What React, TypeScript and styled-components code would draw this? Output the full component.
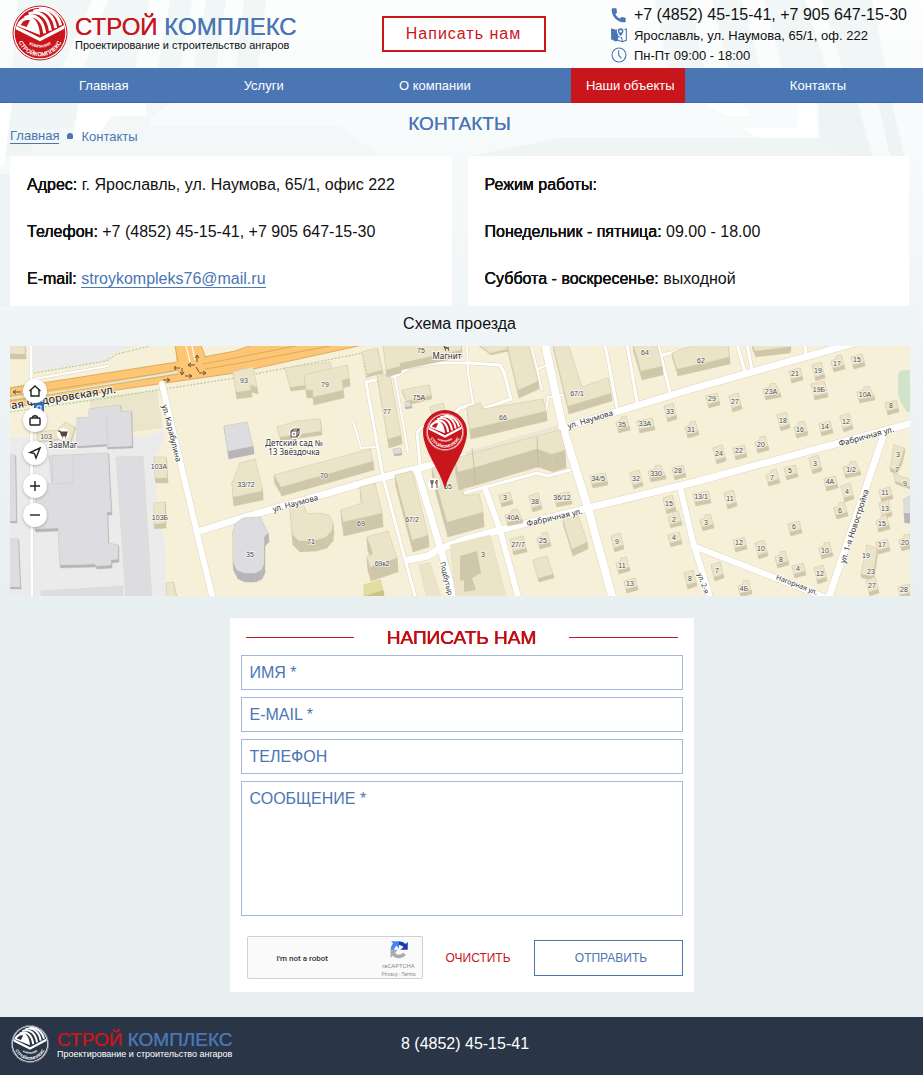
import React, { useId } from "react";
import styled, { createGlobalStyle } from "styled-components";

const blue = "#4a76b4";
const red = "#c9161d";

const GlobalStyle = createGlobalStyle`
  *, *::before, *::after { box-sizing: border-box; }
  body {
    margin: 0;
    background: #e7eff1;
    color: #111;
    font-family: "Liberation Sans", Arial, sans-serif;
    font-size: 16px;
  }
  button, input, textarea { font: inherit; color: inherit; }
`;

/* ---------- page ---------- */

const Page = styled.div`
  position: relative;
  z-index: 0;
  display: flex;
  flex-direction: column;
`;

const BackdropSvg = styled.svg`
  position: absolute;
  z-index: -1;
  top: 0;
  left: 0;
  width: 100%;
  height: 620px;
`;

function Backdrop() {
  const id = useId();
  return (
    <BackdropSvg viewBox="0 0 923 620" preserveAspectRatio="none" aria-hidden="true">
      <defs>
        <linearGradient id={id} x1="0" y1="0" x2="0" y2="1">
          <stop offset="0" stopColor="#fdfefe" />
          <stop offset="0.25" stopColor="#f6fafa" />
          <stop offset="0.5" stopColor="#f0f5f7" />
          <stop offset="1" stopColor="#e7eff1" />
        </linearGradient>
      </defs>
      <rect width="923" height="620" fill={`url(#${id})`} />
      <path d="M18 0H92L62 68H12ZM108 0H150L135 68H84ZM170 0H192L180 68H158ZM206 0H226L216 68H194ZM244 0H266L258 68H236Z" fill="#f1f6f6" />
      <path d="M655 0H690L704 68H668ZM712 0H742L760 68H728ZM764 0H805L826 68H782ZM822 0H872L886 68H842Z" fill="#f1f6f6" />
      <path d="M12 103H78L70 156H4Z" fill="#f0f5f6" />
      <path d="M148 103H172L150 118V126H340L380 156H30L38 130L94 126Z" fill="#f3f7f8" />
      <path d="M0 103H12L4 165H0ZM80 103H146V116H112L94 140H72Z" fill="#fff" />
      <path d="M560 138H818L862 156H470Z" fill="#eff5f5" />
      <path d="M740 103L752 116H730L706 106V103ZM798 103H816L818 138H760L740 128H798Z" fill="#fff" />
      <path d="M818 103H858L872 156H846L820 140Z" fill="#edf4f3" />
      <path d="M868 103H923V156H888Z" fill="#f8fbfb" />
      <path d="M878 103H892L904 156H890Z" fill="#eef4f4" />
      <path d="M0 174H10V306H0Z" fill="#edf3f5" />
    </BackdropSvg>
  );
}

/* ---------- logo ---------- */

const Emblem = styled.svg<{ $size: number }>`
  display: block;
  flex: none;
  width: ${(p) => p.$size}px;
  height: ${(p) => p.$size}px;
`;

function EmblemDrawing({ ink, paper }: { ink: string; paper: string }) {
  const id = useId();
  return (
    <>
      <circle cx="84" cy="84" r="83" fill={paper} />
      <circle cx="84" cy="84" r="81" fill="none" stroke={ink} strokeWidth="3" />
      <circle cx="84" cy="84" r="76" fill={ink} />
      <path d="M14 62C20 46 36 34 52 34C72 38 82 62 84 90Z" fill={paper} />
      <path d="M26 60C32 48 42 42 54 46L44 66Z" fill={ink} />
      <g fill="none" stroke={paper} strokeWidth="9">
        <path d="M38 38C74 22 94 50 98 85" />
        <path d="M50 27C88 12 110 42 115 77" />
        <path d="M64 19C102 6 126 36 131 69" />
        <path d="M82 13C118 8 140 34 146 61" />
      </g>
      <path d="M11 62L84 98L157 60V71L84 109L11 73Z" fill={paper} />
      <path id={`${id}a`} d="M14 84A70 70 0 0 0 154 84" fill="none" />
      <path id={`${id}b`} d="M36 106Q84 150 132 106" fill="none" />
      <g fill={paper} fontFamily="Liberation Sans, Arial, sans-serif" fontWeight="700" textAnchor="middle">
        <text fontSize="18">
          <textPath href={`#${id}a`} startOffset="50%">СТРОЙКОМПЛЕКС</textPath>
        </text>
        <text fontSize="12">
          <textPath href={`#${id}b`} startOffset="50%">КОМПАНИЯ</textPath>
        </text>
      </g>
    </>
  );
}

const BrandLink = styled.a<{ $compact?: boolean }>`
  display: flex;
  align-items: center;
  gap: ${(p) => (p.$compact ? 8 : 7)}px;
  justify-self: start;
  color: ${(p) => (p.$compact ? "#fff" : "#111")};
  text-decoration: none;
  white-space: nowrap;
`;

const BrandName = styled.span<{ $compact?: boolean }>`
  display: block;
  color: ${blue};
  font-size: ${(p) => (p.$compact ? 19 : 24)}px;
  line-height: ${(p) => (p.$compact ? 19 : 24)}px;
  text-shadow: 0 0 0 currentColor;
`;

const BrandAccent = styled.span`
  color: ${red};
`;

const Tagline = styled.span<{ $compact?: boolean }>`
  display: block;
  font-size: ${(p) => (p.$compact ? 9 : 11)}px;
  line-height: ${(p) => (p.$compact ? 10 : 12)}px;
`;

function Brand({ compact }: { compact?: boolean }) {
  return (
    <BrandLink href="#" $compact={compact}>
      <Emblem $size={compact ? 38 : 56} viewBox="0 0 168 168" aria-hidden="true">
        <EmblemDrawing ink={compact ? "#2a3648" : red} paper="#fff" />
      </Emblem>
      <span>
        <BrandName $compact={compact}>
          <BrandAccent>СТРОЙ</BrandAccent> КОМПЛЕКС
        </BrandName>
        <Tagline $compact={compact}>Проектирование и строительство ангаров</Tagline>
      </span>
    </BrandLink>
  );
}

/* ---------- header ---------- */

const Header = styled.header`
  display: grid;
  grid-template-columns: 1fr auto 1fr;
  align-items: center;
  min-height: 68px;
  padding: 0 8px 2px 12px;
`;

const WriteButton = styled.button`
  width: 164px;
  height: 36px;
  margin-top: 2px;
  border: 2px solid ${red};
  background: #fff;
  color: ${red};
  font-size: 16px;
  letter-spacing: 1px;
  cursor: pointer;
`;

const ContactList = styled.ul`
  justify-self: end;
  margin: 0;
  padding: 4px 8px 0 0;
  list-style: none;
`;

const ContactItem = styled.li<{ $large?: boolean }>`
  display: flex;
  align-items: center;
  gap: 7px;
  height: 20px;
  font-size: ${(p) => (p.$large ? 16 : 13)}px;
  white-space: nowrap;

  svg { flex: none; width: 16px; height: 16px; }
`;

const Nav = styled.nav`
  display: flex;
  justify-content: space-between;
  height: 35px;
  padding: 0 67px 0 64px;
  background: ${blue};
  border-bottom: 1px solid #3b68a8;
`;

const NavLink = styled.a<{ $active?: boolean }>`
  display: flex;
  align-items: center;
  margin-bottom: -1px;
  padding: 0 10px 0 15px;
  background: ${(p) => (p.$active ? red : "transparent")};
  color: #fff;
  font-size: 13px;
  text-decoration: none;
  white-space: nowrap;
`;

/* ---------- content ---------- */

const TitleRow = styled.div`
  display: grid;
  grid-template-columns: 1fr auto 1fr;
  min-height: 53px;
  padding: 8px 14px 11px 10px;
`;

const PageTitle = styled.h1`
  margin: 0;
  color: ${blue};
  font-size: 19px;
  font-weight: 400;
  line-height: 26px;
  text-shadow: 0 0 0 currentColor;
`;

const Breadcrumbs = styled.nav`
  display: flex;
  align-items: center;
  align-self: end;
  gap: 8px;
  height: 18px;
  color: ${blue};
  font-size: 13px;
`;

const CrumbLink = styled.a`
  color: inherit;
  line-height: 15px;
  text-decoration: none;
  border-bottom: 1px solid ${blue};
`;

const CrumbDot = styled.span`
  width: 6px;
  height: 6px;
  border-radius: 3px 3px 1px 1px;
  background: ${blue};
`;

const Cards = styled.div`
  display: grid;
  grid-template-columns: 1fr 1fr;
  gap: 16px;
  padding: 0 14px 0 10px;
`;

const Card = styled.section`
  display: flex;
  flex-direction: column;
  gap: 27px;
  min-height: 150px;
  padding: 19px 17px 17px;
  background: #fff;
`;

const CardLine = styled.p`
  margin: 0;
  line-height: 20px;
`;

const Term = styled.strong`
  font-weight: 400;
  text-shadow: 0 0 0 currentColor, 0 0 0 currentColor;
`;

const MailLink = styled.a`
  color: ${blue};
  text-decoration: none;
  border-bottom: 1px solid ${blue};
`;

const MapTitle = styled.h2`
  margin: 0;
  padding: 0 14px 4px 10px;
  font-size: 16px;
  font-weight: 400;
  line-height: 36px;
  text-align: center;
`;

const MapBox = styled.section`
  position: relative;
  height: 250px;
  margin: 0 13px 0 10px;
  overflow: hidden;
`;

const MapSvg = styled.svg`
  display: block;
  width: 100%;
  height: 100%;
`;

const MapControls = styled.div`
  position: absolute;
  top: 33px;
  left: 13px;
  display: flex;
  flex-direction: column;
  gap: 9px;
`;

const ControlGroup = styled.div`
  display: flex;
  flex-direction: column;
  gap: 5px;
`;

const RoundButton = styled.button`
  display: grid;
  place-items: center;
  width: 24px;
  height: 24px;
  padding: 0;
  border: 0;
  border-radius: 50%;
  background: #fff;
  box-shadow: 0 1px 3px rgba(0, 0, 0, 0.25);
  cursor: pointer;

  svg { width: 14px; height: 14px; fill: none; stroke: #222; stroke-width: 1.4; }
`;

/* ---------- map drawing ---------- */

type Shape = { pts: string; h: number; tone?: "sand" | "grey" | "olive" };

const tones = {
  sand: ["#ebe4c8", "#cfc7a9"],
  grey: ["#dddde1", "#b6b6ba"],
  olive: ["#e4dda2", "#cbc383"],
};

const buildings: Shape[] = [
  { pts: "10,346 25,346 25,354 10,354", h: 5 },
  { pts: "37,432 58,430 65,422 75,427 70,442 58,439 38,441", h: 1 },
  { pts: "77,418 89,417 89,409 120,405 121,412 131,411 132,446 107,447 107,444 93,445 77,446", h: 2, tone: "grey" },
  { pts: "49,456 108,453 111,512 107,512 108,543 118,545 118,559 111,560 111,565 96,566 95,564 60,565 58,528 35,529 37,483 52,484", h: 3, tone: "grey" },
  { pts: "116,457 143,456 152,600 126,600", h: 0, tone: "grey" },
  { pts: "41,591 123,586 123,600 41,600", h: 0, tone: "grey" },
  { pts: "10,455 15,455 16,521 10,521", h: 2, tone: "grey" },
  { pts: "10,539 18,539 20,587 10,587", h: 2, tone: "grey" },
  { pts: "154,457 166,457 167,478 155,478", h: 5 },
  { pts: "154,503 165,502 165,523 154,524", h: 5 },
  { pts: "166,583 173,582 177,600 167,600", h: 2 },
  { pts: "224,426 247,422 253,446 228,451", h: 8, tone: "grey" },
  { pts: "233,532 235,524 243,518 260,517 268,533 264,537 264,564 261,570 255,573 244,573 237,570 233,562", h: 9, tone: "grey" },
  { pts: "233,372 253,367 257,387 250,385 251,390 236,392", h: 7 },
  { pts: "285,368 330,362 332,370 305,375 306,385 290,387", h: 4 },
  { pts: "304,375 347,365 349,378 342,380 343,390 313,397 313,390 306,390", h: 8 },
  { pts: "277,427 297,421 320,419 321,431 280,437", h: 4 },
  { pts: "274,475 370,449 373,461 281,487", h: 9 },
  { pts: "232,483 240,463 255,459 262,487 262,491 233,497", h: 9 },
  { pts: "290,508 303,503 307,514 318,513 329,515 333,523 332,530 326,537 316,540 299,541 292,534", h: 11 },
  { pts: "341,510 362,503 360,487 375,483 382,513 343,522", h: 14 },
  { pts: "367,537 388,531 397,558 370,567 367,557 373,554", h: 14 },
  { pts: "364,585 380,580 383,590 364,596", h: 6, tone: "olive" },
  { pts: "362,352 377,348 382,370 367,374", h: 3 },
  { pts: "377,374 390,375 401,435 388,439", h: 9 },
  { pts: "383,344 461,344 461,350 400,363 400,366 386,370", h: 7 },
  { pts: "402,390 429,385 431,395 407,401", h: 4 },
  { pts: "405,402 410,402 411,406 405,407", h: 2, tone: "grey" },
  { pts: "393,449 400,448 401,453 394,454", h: 2, tone: "grey" },
  { pts: "430,407 443,403 450,425 435,428", h: 3 },
  { pts: "395,475 412,471 428,535 412,540", h: 12 },
  { pts: "419,565 430,562 442,600 427,600", h: 0 },
  { pts: "432,468 455,462 464,496 479,494 483,512 447,522", h: 15 },
  { pts: "455,458 537,436 560,430 565,450 552,454 537,449 476,467 458,472", h: 18 },
  { pts: "467,407 480,403 483,409 543,399 546,411 470,429", h: 10 },
  { pts: "478,344 508,344 508,349 490,353", h: 2 },
  { pts: "507,344 528,344 538,381 518,390", h: 8 },
  { pts: "553,344 568,344 582,387 608,378 611,393 568,406", h: 8 },
  { pts: "633,344 657,344 662,366 641,371", h: 9 },
  { pts: "672,353 692,346 728,344 729,357 677,369", h: 7 },
  { pts: "752,344 790,344 789,347 755,351", h: 6 },
  { pts: "450,545 490,535 507,600 456,600", h: 0 },
  { pts: "563,520 578,515 587,542 572,549", h: 7 },
  { pts: "533,560 547,556 553,574 538,578", h: 4 },
  { pts: "904,499 910,496 910,513 904,513", h: 10, tone: "grey" },
  { pts: "894,445 904,448 901,460 896,470 890,468", h: 4 },
  { pts: "894,474 912,480 912,487 895,481", h: 3 },
  { pts: "867,545 877,548 873,576 861,574", h: 4 },
];

const houses: [number, number, string][] = [
  [505, 498, "3"], [535, 502, "38"], [513, 518, "40А"], [562, 498, "36/12"], [518, 545, "27/7"],
  [543, 541, "25"], [598, 479, "34/5"], [636, 479, "32"], [656, 474, "330"], [678, 471, "28"],
  [617, 542, "9"], [622, 566, "11"], [630, 584, "13"], [669, 504, "15"], [674, 520, "2"],
  [674, 538, "4"], [690, 579, "8"], [622, 425, "35"], [645, 424, "33А"], [670, 412, "33"],
  [691, 430, "31"], [712, 399, "29"], [735, 402, "27"], [771, 392, "23А"], [795, 374, "21"],
  [818, 371, "19"], [837, 364, "17"], [857, 360, "15"], [819, 390, "19Б"], [865, 395, "10А"],
  [891, 406, "8"], [783, 421, "18"], [800, 430, "16"], [825, 427, "14"], [846, 422, "12"],
  [761, 445, "20"], [739, 451, "22"], [719, 454, "24"], [772, 478, "7"], [790, 471, "5"],
  [815, 464, "3"], [851, 470, "1/2"], [830, 482, "4А"], [847, 492, "4"], [840, 511, "6"],
  [701, 497, "13/1"], [730, 499, "11"], [706, 523, "3"], [739, 543, "12"], [761, 549, "10"],
  [781, 560, "8"], [798, 569, "4"], [820, 574, "12"], [825, 551, "10"], [794, 527, "6"],
  [717, 571, "7"], [744, 589, "4Б"], [885, 493, "11"], [885, 509, "13"], [882, 524, "15"],
  [882, 545, "17"], [872, 586, "27"], [905, 543, "20"], [904, 590, "28"],
];

const numbers: [number, number, string][] = [
  [503, 417, "66"], [645, 352, "64"], [701, 360, "62"], [577, 393, "67/1"], [325, 384, "79"],
  [387, 411, "77"], [421, 350, "75"], [419, 397, "75А"], [244, 380, "93"], [324, 475, "70"],
  [246, 484, "33/72"], [250, 554, "35"], [311, 541, "71"], [361, 523, "69"], [412, 519, "67/2"],
  [382, 563, "69к2"], [448, 486, "65"], [483, 554, "3"], [46, 436, "103"], [159, 466, "103А"],
  [160, 517, "103Б"], [898, 454, "3"], [897, 469, "7"], [905, 483, "9"], [866, 555, "19"], [871, 571, "23"],
];

const streets: [string, number][] = [
  ["M31 346L32 600", 3],
  ["M34 379L108 366", 2],
  ["M162 384L197 533L213 600", 6],
  ["M197 532L235 520L380 478L463 457L560 429L695 388L855 343", 7],
  ["M408 560L428 556L437 550L463 540L500 530L588 508L695 482L912 423", 7],
  ["M545 344L563 428L588 508L613 600", 8],
  ["M417 470L440 547L455 600", 7],
  ["M485 488L500 530L519 600", 6],
  ["M460 494L537 473L548 476L570 470", 3],
  ["M366 382L383 477L416 600", 3],
  ["M366 382L398 375L410 367L437 363H470L500 365L504 372L511 399L485 408", 3],
  ["M395 377L408 452", 2],
  ["M353 421L361 448L375 447", 2],
  ["M420 465L417 432L422 427L448 420L460 408L473 404", 3],
  ["M467 344L468 372L473 403", 2],
  ["M532 348L537 369L542 390M537 369L546 366M563 395L548 397L546 412", 2],
  ["M605 344L617 407", 3],
  ["M627 344L637 402", 3],
  ["M658 344L670 392M662 355L697 347", 3],
  ["M737 344L745 372M747 344L752 370M805 344L806 354", 3],
  ["M680 487L693 542L711 600", 6],
  ["M693 546L832 600", 6],
  ["M884 434L828 600", 7],
];

function parse(pts: string) {
  return pts.split(" ").map((p) => p.split(",").map(Number));
}

function Building({ pts, h, tone = "sand" }: Shape) {
  const [roof, wall] = tones[tone];
  const corners = parse(pts);
  return (
    <g>
      {h > 0 &&
        corners.map(([x, y], i) => {
          const [nx, ny] = corners[(i + 1) % corners.length];
          return (
            <path key={i} d={`M${x} ${y}L${nx} ${ny}L${nx + 1} ${ny + h}L${x + 1} ${y + h}Z`} fill={wall} stroke={wall} strokeWidth="0.4" />
          );
        })}
      <polygon points={pts} fill={roof} stroke="#d9d1b4" strokeOpacity="0.6" strokeWidth="0.6" />
    </g>
  );
}

/* Small houses come in three outlines: a plain block, a deep block and an L-shape. */
function House({ x, y, label, index }: { x: number; y: number; label: string; index: number }) {
  const w = label.length > 2 ? 8 : 6;
  const kind = index % 3;
  const outline = [
    `${x - w},${y - 3} ${x + w - 1},${y - 6} ${x + w + 1},${y + 2} ${x - w + 2},${y + 5}`,
    `${x - w},${y - 6} ${x + w - 3},${y - 9} ${x + w},${y + 3} ${x - w + 3},${y + 6}`,
    `${x - w},${y - 3} ${x - 1},${y - 5} ${x - 1},${y - 8} ${x + 4},${y - 9} ${x + w + 1},${y + 1} ${x - w + 2},${y + 4}`,
  ][kind];
  return <Building pts={outline} h={4} />;
}

function MapDrawing() {
  return (
    <MapSvg viewBox="10 346 900 250" preserveAspectRatio="xMidYMid slice" role="img" aria-label="Схема проезда">
      <rect x="-500" y="0" width="2000" height="900" fill="#f7f0d9" />
      <path d="M33 346H132L114 354L106 362L33 372ZM10 438L150 436L163 429V443L155 457L157 510L165 543L166 600H10Z" fill="#ebebec" />
      <path d="M90 398L157 390L163 428L132 432L128 412L90 409Z" fill="#ebe6cb" />
      <path d="M898 374Q900 370 904 370H912V412H907Q898 400 898 392Z" fill="#d0e4cc" />

      <g fill="none" stroke="#b3cc9d" strokeWidth="1.2" strokeDasharray="2 1.5">
        <path d="M34 373L106 361L117 354L150 346M10 412L113 397L235 378L378 350L382 374M362 352L367 380M10 388L34 383" />
      </g>

      <path d="M10 388L177 362L235 351L258 343H372L235 373L110 391L10 408Z" fill="#fdc675" stroke="#d99d50" strokeWidth="0.8" />
      <path d="M175 344H201L208 366L177 368Z" fill="#fdc675" />
      <path d="M186 346L190 362M192 346L195 360" stroke="#fff6e0" strokeWidth="1.4" />
      <path d="M175 346L178 362M201 346L206 358" stroke="#d99d50" strokeWidth="0.8" />
      <path d="M10 398L70 391L150 377L178 372" fill="none" stroke="#dcebd8" strokeWidth="2.6" />
      <path d="M10 396L150 375L178 370M10 401L178 374M203 364L235 358L300 345M205 369L235 364L335 345" fill="none" stroke="#dc9f52" strokeWidth="0.8" />
      <path d="M13 392H21M16 390L13 392L16 394M163 380H169M167 378L170 380L167 382M174 368H180M176 366L174 368L176 370M182 368V374M180 372L182 375L184 372M189 365H195M191 363L188 365L191 367M197 362V356M195 358L197 355L199 358M185 376H191M189 374L192 376L189 378M199 373H205M203 371L206 373L203 375M196 367L199 372" fill="none" stroke="#5b4630" strokeWidth="0.9" />

      <g fill="none" strokeLinejoin="round" strokeLinecap="round">
        {streets.map(([d, w], i) => (
          <path key={i} d={d} stroke="#ddd5bd" strokeWidth={w + 1} />
        ))}
        {streets.map(([d, w], i) => (
          <path key={i} d={d} stroke="#fff" strokeWidth={w} />
        ))}
      </g>
      <path d="M465 452L558 426L560 433L467 458Z" fill="#eee6d2" />

      {buildings.map((b, i) => (
        <Building key={i} {...b} />
      ))}
      <path d="M460 556L477 551L481 573L472 578L476 590L464 592V580L460 581Z" fill="#cfc7a9" />
      <path d="M52 457L53 484L73 483M73 456V484M106 412L108 445" fill="none" stroke="#cfcfd5" strokeWidth="0.8" />
      <path d="M472 448L476 484M537 437L538 468" fill="none" stroke="#bdb493" strokeWidth="0.7" />
      {houses.map(([x, y, label], i) => (
        <House key={i} x={x} y={y} label={label} index={i} />
      ))}

      <g fontFamily="Liberation Sans, Arial, sans-serif" fontSize="7" fill="#4a4a4a" textAnchor="middle" stroke="#fff" strokeOpacity="0.7" strokeWidth="1.5" paintOrder="stroke">
        {houses.map(([x, y, label], i) => (
          <text key={i} x={x} y={y + 2}>{label}</text>
        ))}
        {numbers.map(([x, y, label], i) => (
          <text key={i} x={x} y={y + 3}>{label}</text>
        ))}
      </g>

      <g fontFamily="Noto Sans, sans-serif" fontSize="8" fill="#333" textAnchor="middle" stroke="#fff" strokeOpacity="0.8" strokeWidth="2" paintOrder="stroke">
        <text fontSize="11" fontWeight="500" transform="translate(64 401) rotate(-9)">ая Фёдоровская ул.</text>
        <text transform="translate(169 434) rotate(76)">ул. Карабулина</text>
        <text transform="translate(296 506) rotate(-15)">ул. Наумова</text>
        <text transform="translate(591 422) rotate(-17)">ул. Наумова</text>
        <text transform="translate(555 520) rotate(-13)">Фабричная ул.</text>
        <text transform="translate(867 439) rotate(-15)">Фабричная ул.</text>
        <text transform="translate(857 527) rotate(-72)">ул. 1-я Новостройка</text>
        <text fontSize="7" transform="translate(796 587) rotate(21)">Нагорная ул.</text>
        <text fontSize="7" transform="translate(444 579) rotate(76)">Подбутыр</text>
        <text fontSize="7" transform="translate(701 584) rotate(70)">ул. 2-я</text>
        <text x="63" y="448">ЗавМаг</text>
        <text x="447" y="359">Магнит</text>
        <text x="294" y="446">Детский сад №</text>
        <text x="294" y="455">13 Звёздочка</text>
      </g>

      <rect x="34" y="402" width="10" height="14" rx="1" fill="#2f6fc0" />
      <path d="M37 410V406H41V410ZM37 412H38M40 412H41" fill="none" stroke="#fff" />
      <circle cx="63" cy="434" r="6" fill="#fff" />
      <path d="M58 431H60L62 436H66L67 432H60M62 438H63M65 438H66" fill="#5b443a" stroke="#5b443a" strokeWidth="1.2" />
      <path d="M442 345H444L445 348H449M445 350H446M448 350H449" fill="none" stroke="#5b443a" strokeWidth="1.4" />
      <circle cx="295" cy="433" r="6" fill="#fff" />
      <path d="M291 431H297V437H291ZM291 431L294 429H299V434L297 437M297 431L299 429M293 434H295" fill="none" stroke="#5b443a" strokeWidth="1.1" />
      <circle cx="434" cy="484" r="6" fill="#fff" />
      <path d="M431 480V483Q432 485 433 483V480M432 480V488M437 488V480Q435 481 436 484" fill="none" stroke="#5b443a" strokeWidth="1" />

      <path d="M445 489C440 470 423 450 423 432A22 22 0 0 1 467 432C467 450 450 470 445 489Z" fill={red} />
      <svg x="426" y="413" width="38" height="38" viewBox="0 0 168 168">
        <EmblemDrawing ink={red} paper="#fff" />
      </svg>
    </MapSvg>
  );
}

/* ---------- form ---------- */

const FormPanel = styled.form`
  display: flex;
  flex-direction: column;
  gap: 7px;
  width: 100%;
  max-width: 464px;
  margin: 22px auto 25px;
  padding: 0 11px 13px;
  background: #fff;
  color: ${blue};
`;

const FormHeading = styled.div`
  display: flex;
  align-items: center;
  gap: 33px;
  height: 37px;
  margin-bottom: -7px;
  padding: 2px 5px 0;

  &::before, &::after {
    content: "";
    flex: 1;
    height: 1px;
    background: ${red};
  }
`;

const FormTitle = styled.h2`
  margin: 0;
  color: #c20b10;
  font-size: 19px;
  font-weight: 400;
  text-shadow: 0 0 0 currentColor, 0 0 0 currentColor;
`;

const Field = styled.label<{ $tall?: boolean }>`
  display: flex;
  gap: 8px;
  height: ${(p) => (p.$tall ? 135 : 35)}px;
  padding: 8px;
  border: 1px solid #a3b9dc;
  line-height: 18px;
  white-space: nowrap;
`;

const TextInput = styled.input`
  flex: 1;
  min-width: 0;
  padding: 0;
  border: 0;
  outline: 0;
  background: none;
`;

const MessageInput = styled.textarea`
  flex: 1;
  min-width: 0;
  padding: 0;
  border: 0;
  outline: 0;
  resize: none;
  background: none;
`;

const Actions = styled.div`
  display: flex;
  align-items: center;
  justify-content: space-between;
  padding: 13px 0 0 6px;
`;

const Captcha = styled.div`
  display: flex;
  align-items: center;
  justify-content: space-between;
  width: 176px;
  height: 43px;
  padding: 2px 6px 0 10px;
  border: 1px solid #d0d0d0;
  border-radius: 2px;
  background: #fafafa;
  font-family: Roboto, sans-serif;
`;

const CaptchaLabel = styled.label`
  display: flex;
  align-items: center;
  gap: 5px;
  color: #333;
  font-size: 8px;
  font-weight: 500;
`;

const CaptchaBox = styled.input`
  width: 14px;
  height: 14px;
  margin: 0;
  appearance: none;
`;

const CaptchaBadge = styled.div`
  display: flex;
  flex-direction: column;
  align-items: center;
  color: #8a8a8a;
  font-size: 6px;
  line-height: 8px;

  svg { width: 20px; height: 20px; margin-bottom: 2px; }
`;

const CaptchaTerms = styled.span`
  font-size: 5px;
`;

const ClearButton = styled.button`
  padding: 0;
  border: 0;
  background: none;
  color: ${red};
  font-size: 12px;
  cursor: pointer;
`;

const SubmitButton = styled.button`
  width: 149px;
  height: 36px;
  padding: 0 0 0 6px;
  border: 1px solid ${blue};
  background: #fff;
  color: ${blue};
  font-size: 12px;
  cursor: pointer;
`;

/* ---------- footer ---------- */

const Footer = styled.footer`
  display: grid;
  grid-template-columns: 1fr auto 1fr;
  align-items: center;
  min-height: 58px;
  padding: 0 4px 4px 11px;
  background: #2a3648;
  color: #fff;
`;

const FooterPhone = styled.a`
  color: inherit;
  text-decoration: none;
`;

export default function App() {
  return (
    <>
      <GlobalStyle />
      <Page>
        <Backdrop />
        <Header>
          <Brand />
          <WriteButton type="button">Написать нам</WriteButton>
          <ContactList>
            <ContactItem $large>
              <svg viewBox="0 0 24 24" fill={blue} aria-hidden="true">
                <path d="M6.6 10.8c1.4 2.8 3.8 5.1 6.6 6.6l2.2-2.2c.3-.3.7-.4 1-.2 1.1.4 2.3.6 3.6.6.9 0 2 .4 2 1.200V22c0 .6-.4 1-1 1C9.500 23 1 14.500 1 4c0-.6.4-2 1-2h5.500c.6 0 1 .9 1 2 0 1.200.2 2.400.6 3.600.1.4 0 .8-.3 1z" />
              </svg>
              +7 (4852) 45-15-41, +7 905 647-15-30
            </ContactItem>
            <ContactItem>
              <svg viewBox="0 0 24 24" fill="none" stroke={blue} strokeWidth="1.6" aria-hidden="true">
                <path d="M1 3L7 5L10 4V20L7 21L1 18Z" fill={blue} />
                <path d="M10 20L17 22L23 20V3L20 4M10 14L16 16L17 22" />
                <path d="M14.500 15C11 10.500 9.500 8.500 9.500 6.200A5 5 0 0 1 19.500 6.200C19.500 8.500 18 10.500 14.500 15Z" fill={blue} stroke="#fff" />
                <circle cx="14.500" cy="6.300" r="1.800" fill="#fff" stroke="none" />
              </svg>
              Ярославль, ул. Наумова, 65/1, оф. 222
            </ContactItem>
            <ContactItem>
              <svg viewBox="0 0 24 24" fill="none" stroke={blue} strokeWidth="1.7" aria-hidden="true">
                <circle cx="12" cy="12" r="10.500" />
                <path d="M11.500 5V12L15.500 17" />
              </svg>
              Пн-Пт 09:00 - 18:00
            </ContactItem>
          </ContactList>
        </Header>
        <Nav aria-label="Основное меню">
          <NavLink href="#">Главная</NavLink>
          <NavLink href="#">Услуги</NavLink>
          <NavLink href="#">О компании</NavLink>
          <NavLink href="#" $active>Наши объекты</NavLink>
          <NavLink href="#">Контакты</NavLink>
        </Nav>
        <main>
          <TitleRow>
            <Breadcrumbs aria-label="Навигация">
              <CrumbLink href="#">Главная</CrumbLink>
              <CrumbDot />
              <span>Контакты</span>
            </Breadcrumbs>
            <PageTitle>КОНТАКТЫ</PageTitle>
          </TitleRow>
          <Cards>
            <Card>
              <CardLine><Term>Адрес:</Term> г. Ярославль, ул. Наумова, 65/1, офис 222</CardLine>
              <CardLine><Term>Телефон:</Term> +7 (4852) 45-15-41, +7 905 647-15-30</CardLine>
              <CardLine><Term>E-mail:</Term> <MailLink href="mailto:stroykompleks76@mail.ru">stroykompleks76@mail.ru</MailLink></CardLine>
            </Card>
            <Card>
              <CardLine><Term>Режим работы:</Term></CardLine>
              <CardLine><Term>Понедельник - пятница:</Term> 09.00 - 18.00</CardLine>
              <CardLine><Term>Суббота - воскресенье:</Term> выходной</CardLine>
            </Card>
          </Cards>
          <MapTitle>Схема проезда</MapTitle>
          <MapBox>
            <MapDrawing />
            <MapControls>
              <ControlGroup>
                <RoundButton type="button" aria-label="Домой">
                  <svg viewBox="0 0 14 14"><path d="M1.500 7L7 2L12.500 7M3 6V12H11V6" /></svg>
                </RoundButton>
                <RoundButton type="button" aria-label="Работа">
                  <svg viewBox="0 0 14 14"><rect x="2" y="5" width="10" height="7" rx="1" /><path d="M4.500 5C4.500 2 9.500 2 9.500 5" /></svg>
                </RoundButton>
              </ControlGroup>
              <RoundButton type="button" aria-label="Моё местоположение">
                <svg viewBox="0 0 14 14"><path d="M12 2L2 6.500L6.500 7.500L8 12Z" /></svg>
              </RoundButton>
              <ControlGroup>
                <RoundButton type="button" aria-label="Приблизить">
                  <svg viewBox="0 0 14 14"><path d="M2 7H12M7 2V12" /></svg>
                </RoundButton>
                <RoundButton type="button" aria-label="Отдалить">
                  <svg viewBox="0 0 14 14"><path d="M2 7H12" /></svg>
                </RoundButton>
              </ControlGroup>
            </MapControls>
          </MapBox>
          <FormPanel onSubmit={(e) => e.preventDefault()}>
            <FormHeading>
              <FormTitle>НАПИСАТЬ НАМ</FormTitle>
            </FormHeading>
            <Field>ИМЯ *<TextInput type="text" name="name" required /></Field>
            <Field>E-MAIL *<TextInput type="email" name="email" required /></Field>
            <Field>ТЕЛЕФОН<TextInput type="tel" name="phone" /></Field>
            <Field $tall>СООБЩЕНИЕ *<MessageInput name="message" required /></Field>
            <Actions>
              <Captcha>
                <CaptchaLabel>
                  <CaptchaBox type="checkbox" name="human" />
                  I'm not a robot
                </CaptchaLabel>
                <CaptchaBadge>
                  <svg viewBox="0 0 64 64" aria-hidden="true">
                    <path d="M60 31V6L53 13A28 28 0 0 0 32 4V16C38 16 43 19 46 23L36 31Z" fill="#1c3aa9" />
                    <path d="M32 4H7L13 11A28 28 0 0 0 5 31H17C17 25 20 21 24 18L32 28Z" fill="#4285f4" />
                    <path d="M5 31V57L12 50A28 28 0 0 0 54 48L45 40C38 50 24 49 20 40L29 31Z" fill="#ababab" />
                  </svg>
                  <span>reCAPTCHA</span>
                  <CaptchaTerms>Privacy - Terms</CaptchaTerms>
                </CaptchaBadge>
              </Captcha>
              <ClearButton type="reset">ОЧИСТИТЬ</ClearButton>
              <SubmitButton type="submit">ОТПРАВИТЬ</SubmitButton>
            </Actions>
          </FormPanel>
        </main>
        <Footer>
          <Brand compact />
          <FooterPhone href="tel:84852451541">8 (4852) 45-15-41</FooterPhone>
        </Footer>
      </Page>
    </>
  );
}
